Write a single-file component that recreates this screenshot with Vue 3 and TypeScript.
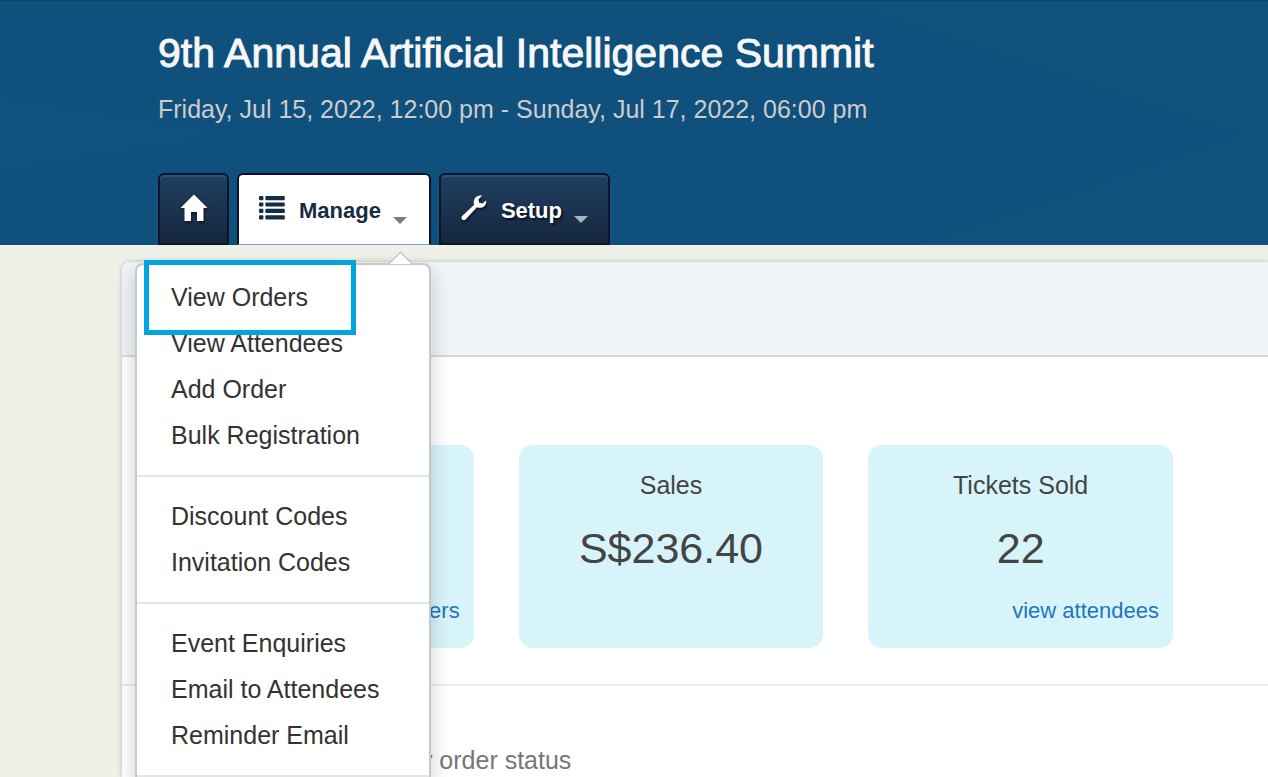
<script setup lang="ts">
interface Stat {
  title?: string
  value?: string
  link?: string
}

const menuGroups: string[][] = [
  ['View Orders', 'View Attendees', 'Add Order', 'Bulk Registration'],
  ['Discount Codes', 'Invitation Codes'],
  ['Event Enquiries', 'Email to Attendees', 'Reminder Email'],
]

const stats: Stat[] = [
  { link: 'view orders' },
  { title: 'Sales', value: 'S$236.40' },
  { title: 'Tickets Sold', value: '22', link: 'view attendees' },
]
</script>

<template>
  <div class="page">
    <header class="hero">
      <svg class="facets" viewBox="0 0 1268 245" preserveAspectRatio="none" aria-hidden="true">
        <polygon points="840,0 1268,0 1268,245 920,245 1242,134" fill="#fff" opacity="0.01" />
        <polygon points="0,95 230,134 0,172" fill="#fff" opacity="0.006" />
      </svg>
      <h1>9th Annual Artificial Intelligence Summit</h1>
      <p class="dates">Friday, Jul 15, 2022, 12:00 pm - Sunday, Jul 17, 2022, 06:00 pm</p>
      <nav class="tabs">
        <a class="tab home" href="#" aria-label="Home">
          <svg width="28" height="28" viewBox="0 0 28 28" fill="#fff">
            <path d="M14 0.5 L27.5 14 H23.5 V27 H17 V18 H11 V27 H4.5 V14 H0.5 Z" />
          </svg>
        </a>
        <div class="tab-wrap">
          <button class="tab active" type="button" aria-expanded="true">
            <svg class="icon" width="26" height="24" viewBox="0 0 26 24" fill="#172d45">
              <g v-for="i in 4" :key="i">
                <rect x="0" :y="(i - 1) * 6.4" width="4.4" height="4.2" rx="1" />
                <rect x="6.4" :y="(i - 1) * 6.4" width="19.4" height="4.2" rx="1" />
              </g>
            </svg>
            <span>Manage</span>
            <i class="caret"></i>
          </button>
          <div class="menu">
            <ul v-for="(group, g) in menuGroups" :key="g">
              <li v-for="item in group" :key="item" :class="{ marked: item === 'View Orders' }">
                <a href="#">{{ item }}</a>
              </li>
            </ul>
          </div>
        </div>
        <button class="tab setup" type="button">
          <svg class="icon" width="26" height="26" viewBox="0 0 26 26" fill="#fff">
            <path d="M21.2 0.8 L17.6 4.2 L18.2 7.6 L21.6 8.4 L25.2 5.4 C26 9.2 23.2 12.8 19.4 12.8 C18 12.8 17 12.6 16 12.2 L4.6 24.6 C2.2 26.6 -1 23.4 1.2 21 L13.2 9.8 C11.4 4.6 15.6 -0.8 21.2 0.8 Z" />
          </svg>
          <span>Setup</span>
          <i class="caret"></i>
        </button>
      </nav>
    </header>

    <main class="panel">
      <div class="panel-head"></div>
      <section class="stats">
        <article v-for="(stat, i) in stats" :key="i" class="stat">
          <h2 v-if="stat.title">{{ stat.title }}</h2>
          <p v-if="stat.value">{{ stat.value }}</p>
          <a v-if="stat.link" href="#">{{ stat.link }}</a>
        </article>
      </section>
      <h3 class="status">by order status</h3>
    </main>
  </div>
</template>

<style>
body {
  margin: 0;
  background: #eff0e8;
}
</style>

<style scoped>
*,
*::before,
*::after {
  box-sizing: border-box;
}
.page {
  display: flex;
  flex-direction: column;
  min-height: 100vh;
  font-family: 'Liberation Sans', Arial, sans-serif;
  background: #eff0e8;
}
a {
  text-decoration: none;
}
.hero {
  position: relative;
  z-index: 2;
  padding: 28px 0 0 158px;
  background: #0f507c;
  border-top: 1px solid #0c4368;
}
.facets {
  position: absolute;
  inset: 0;
  width: 100%;
  height: 100%;
}
h1 {
  position: relative;
  margin: 0;
  font-size: 41px;
  font-weight: 400;
  line-height: 48px;
  color: #f7f7f7;
  -webkit-text-stroke: 1px #f7f7f7;
}
.dates {
  position: relative;
  margin: 16px 0 0;
  font-size: 25px;
  line-height: 32px;
  color: #ccc;
}
.tabs {
  display: flex;
  gap: 8px;
  margin-top: 48px;
}
.tab-wrap {
  position: relative;
}
.tab {
  position: relative;
  display: flex;
  align-items: center;
  height: 72px;
  padding: 3px 20px 0;
  border: 2px solid #0a1626;
  border-radius: 6px 6px 0 0;
  background: linear-gradient(#213f62, #15273e);
  box-shadow: inset 0 2px 0 #2d5280;
  color: #fff;
  font: bold 22px/28px 'Liberation Sans', Arial, sans-serif;
  text-shadow: 2px 2px 2px rgba(0, 0, 0, 0.6);
}
.tab svg {
  margin-bottom: 6px;
  filter: drop-shadow(1px 2px 1px rgba(0, 0, 0, 0.5));
}
.tab .icon {
  margin-right: 14px;
}
.tab.home {
  width: 71px;
  padding: 3px 0 0;
  justify-content: center;
}
.tab.active {
  width: 194px;
  background: #fff;
  border-bottom: 1px solid #7fa3c0;
  box-shadow: none;
  color: #172d45;
  text-shadow: none;
}
.tab.active svg {
  filter: none;
}
.tab.setup {
  width: 171px;
}
.caret {
  margin: 18px 0 0 12px;
  border: 7px solid transparent;
  border-top-color: #a9b4c0;
  border-bottom: 0;
}
.active .caret {
  border-top-color: #6f8195;
}
.menu {
  position: absolute;
  top: 90px;
  right: 0;
  width: 296px;
  padding-top: 9px;
  background: #fff;
  border: 2px solid #c6c8ca;
  border-bottom: 0;
  border-radius: 8px 8px 0 0;
  box-shadow: 0 8px 20px rgba(0, 0, 0, 0.2);
}
.menu::before {
  content: '';
  position: absolute;
  top: -10px;
  right: 20px;
  width: 17px;
  height: 17px;
  background: linear-gradient(135deg, #fff 50%, transparent 50%);
  border: solid #b8babb;
  border-width: 1px 0 0 1px;
  transform: rotate(45deg);
}
.menu ul {
  margin: 0;
  padding: 16px 0 17px;
  list-style: none;
  border-bottom: 2px solid #e5e5e5;
}
.menu ul:first-child {
  padding-top: 0;
}
.menu li {
  position: relative;
}
.menu a {
  display: block;
  padding-left: 34px;
  font-size: 25px;
  line-height: 46px;
  color: #333;
}
.marked::after {
  content: '';
  position: absolute;
  top: -14px;
  left: 7px;
  width: 212px;
  height: 75px;
  border: 5px solid #00a5df;
  pointer-events: none;
  z-index: 1;
}
.panel {
  flex: 1;
  margin: 17px 0 0 122px;
  background: #fff;
  border-radius: 8px 0 0 0;
  box-shadow: 0 0 5px rgba(0, 0, 0, 0.2);
}
.panel-head {
  height: 95px;
  background: #eff4f9;
  border-bottom: 2px solid #d6dade;
  border-radius: 8px 0 0 0;
}
.stats {
  display: grid;
  grid-template-columns: repeat(3, 1fr);
  gap: 45px;
  padding: 88px 95px 36px 47px;
  border-bottom: 2px solid #ececec;
}
.stat {
  display: flex;
  flex-direction: column;
  height: 203px;
  padding: 24px 14px 22px;
  background: #d8f4fb;
  border-radius: 14px;
  text-align: center;
  color: #444;
}
.stat h2 {
  margin: 0;
  font-size: 25px;
  font-weight: 400;
  line-height: 32px;
}
.stat p {
  margin: 19px 0 0;
  font-size: 43px;
  line-height: 56px;
}
.stat a {
  margin-top: auto;
  text-align: right;
  font-size: 22px;
  line-height: 30px;
  color: #2176bd;
}
.status {
  margin: 58px 0 0;
  padding-left: 284px;
  font-size: 25px;
  font-weight: 400;
  line-height: 32px;
  color: #777;
}
</style>
